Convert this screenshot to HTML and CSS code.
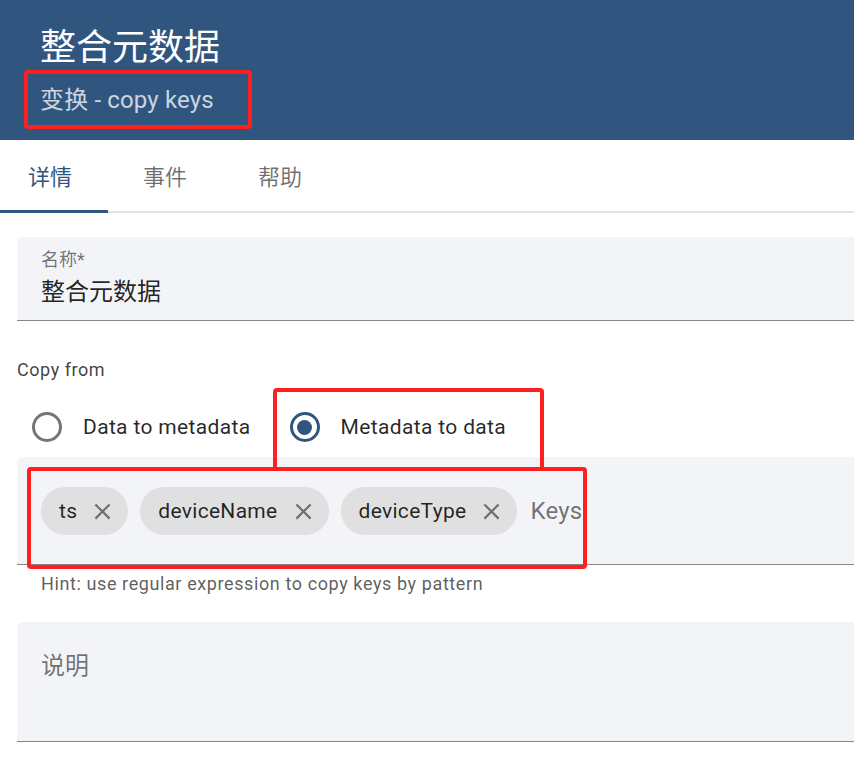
FILE: index.html
```html
<!DOCTYPE html>
<html lang="zh">
<head>
<meta charset="utf-8">
<title>整合元数据</title>
<link rel="stylesheet" href="styles.css">
</head>
<body>
<div class="page">
  <header class="hdr">
    <h1 class="title">整合元数据</h1>
    <div class="subtitle">变换 - copy keys</div>
  </header>

  <nav class="tabs">
    <div class="tab active">详情</div>
    <div class="tab">事件</div>
    <div class="tab">帮助</div>
  </nav>

  <main class="content">
    <div class="field name-field">
      <div class="field-label">名称*</div>
      <div class="field-value">整合元数据</div>
    </div>

    <div class="copy-label">Copy from</div>

    <div class="radio-group">
      <div class="radio">
        <span class="radio-box"><span class="circle"></span></span>
        <span class="radio-text">Data to metadata</span>
      </div>
      <div class="radio checked">
        <span class="radio-box"><span class="circle"><span class="dot"></span></span></span>
        <span class="radio-text">Metadata to data</span>
      </div>
    </div>

    <div class="field chips-field">
      <div class="chips">
        <span class="chip">ts<svg class="chip-x" viewBox="0 0 24 24"><path d="M19 6.41 17.59 5 12 10.59 6.41 5 5 6.41 10.59 12 5 17.59 6.41 19 12 13.41 17.59 19 19 17.59 13.41 12z"/></svg></span>
        <span class="chip">deviceName<svg class="chip-x" viewBox="0 0 24 24"><path d="M19 6.41 17.59 5 12 10.59 6.41 5 5 6.41 10.59 12 5 17.59 6.41 19 12 13.41 17.59 19 19 17.59 13.41 12z"/></svg></span>
        <span class="chip">deviceType<svg class="chip-x" viewBox="0 0 24 24"><path d="M19 6.41 17.59 5 12 10.59 6.41 5 5 6.41 10.59 12 5 17.59 6.41 19 12 13.41 17.59 19 19 17.59 13.41 12z"/></svg></span>
        <span class="chip-input">Keys</span>
      </div>
    </div>
    <div class="hint">Hint: use regular expression to copy keys by pattern</div>

    <div class="field desc-field">
      <div class="placeholder">说明</div>
    </div>
  </main>

  <div class="annot annot-1"></div>
  <div class="annot annot-2"></div>
  <div class="annot annot-3"></div>
</div>
</body>
</html>
```

FILE: styles.css
```css
* { box-sizing: border-box; }

html, body {
  margin: 0;
  padding: 0;
  background: #ffffff;
}

body {
  font-family: Roboto, "Noto Sans CJK SC", sans-serif;
  color: rgba(0, 0, 0, 0.87);
  overflow: hidden;
}

.page {
  position: relative;
  width: 854px;
  height: 774px;
  overflow: hidden;
}

/* Header */
.hdr {
  background: #30567f;
  height: 140px;
  padding: 26px 40px 0;
}

.title {
  margin: 0;
  font-size: 36px;
  line-height: 44px;
  font-weight: 400;
  color: #ffffff;
}

.subtitle {
  margin-top: 14px;
  font-size: 24px;
  line-height: 32px;
  letter-spacing: 0.15px;
  color: rgba(255, 255, 255, 0.76);
}

/* Tabs */
.tabs {
  display: flex;
  gap: 7px;
  height: 73px;
  border-bottom: 2px solid #e2e2e2;
}

.tab {
  width: 108px;
  height: 69px;
  padding-left: 28px;
  display: flex;
  align-items: center;
  font-size: 22px;
  color: rgba(0, 0, 0, 0.56);
  position: relative;
}

.tab.active {
  color: #30567f;
}

.tab.active::after {
  content: "";
  position: absolute;
  left: 0;
  right: 0;
  bottom: -4px;
  height: 3px;
  background: #30567f;
}

/* Content */
.content {
  padding: 24px 0 0 17px;
  margin-right: -40px;
}

.field {
  background: #f3f4f8;
  border-radius: 6px 6px 0 0;
  border-bottom: 1px solid rgba(0, 0, 0, 0.45);
}

.name-field {
  height: 84px;
  padding: 12px 24px 0;
}

.field-label {
  font-size: 18px;
  line-height: 22px;
  color: rgba(0, 0, 0, 0.55);
}

.field-value {
  margin-top: 6px;
  font-size: 24px;
  line-height: 30px;
}

.copy-label {
  margin-top: 37px;
  font-size: 18px;
  line-height: 24px;
  letter-spacing: 0.55px;
  color: rgba(0, 0, 0, 0.75);
}

.radio-group {
  display: flex;
  gap: 18px;
  margin-top: 15px;
  height: 60px;
}

.radio {
  display: flex;
  align-items: center;
}

.radio-box {
  width: 60px;
  height: 60px;
  display: flex;
  align-items: center;
  justify-content: center;
}

.circle {
  width: 30px;
  height: 30px;
  border-radius: 50%;
  border: 3px solid #757575;
  display: flex;
  align-items: center;
  justify-content: center;
}

.radio.checked .circle {
  border-color: #30567f;
}

.dot {
  width: 15px;
  height: 15px;
  border-radius: 50%;
  background: #30567f;
}

.radio-text {
  padding: 0 6px;
  font-size: 21px;
  letter-spacing: 0.35px;
  line-height: 28px;
  color: rgba(0, 0, 0, 0.85);
}

.chips-field {
  height: 108px;
  padding: 30px 24px 0;
}

.chips {
  display: flex;
  align-items: center;
  gap: 12px;
}

.chip {
  height: 48px;
  border-radius: 24px;
  background: #e0e0e0;
  display: flex;
  align-items: center;
  padding: 0 12px 0 18px;
  font-size: 21px;
  letter-spacing: 0.3px;
  color: rgba(0, 0, 0, 0.85);
}

.chip-x {
  width: 27px;
  height: 27px;
  margin-left: 12px;
  fill: #6f6f6f;
}

.chip-input {
  margin-left: 1px;
  font-size: 24px;
  letter-spacing: 0.2px;
  color: rgba(0, 0, 0, 0.55);
}

.hint {
  margin-top: 7px;
  padding-left: 24px;
  font-size: 18px;
  line-height: 24px;
  letter-spacing: 0.6px;
  color: rgba(0, 0, 0, 0.65);
}

.desc-field {
  margin-top: 26px;
  height: 120px;
  padding: 29px 24px 0;
}

.placeholder {
  font-size: 24px;
  line-height: 30px;
  color: rgba(0, 0, 0, 0.55);
}

/* Red annotation overlays */
.annot {
  position: absolute;
  border: 4px solid #fe1f1f;
  border-radius: 4px;
  pointer-events: none;
}

.annot-1 { left: 24px; top: 70px; width: 228px; height: 59px; }
.annot-2 { left: 273px; top: 388px; width: 271px; height: 83px; }
.annot-3 { left: 27px; top: 467px; width: 560px; height: 102px; }
```
